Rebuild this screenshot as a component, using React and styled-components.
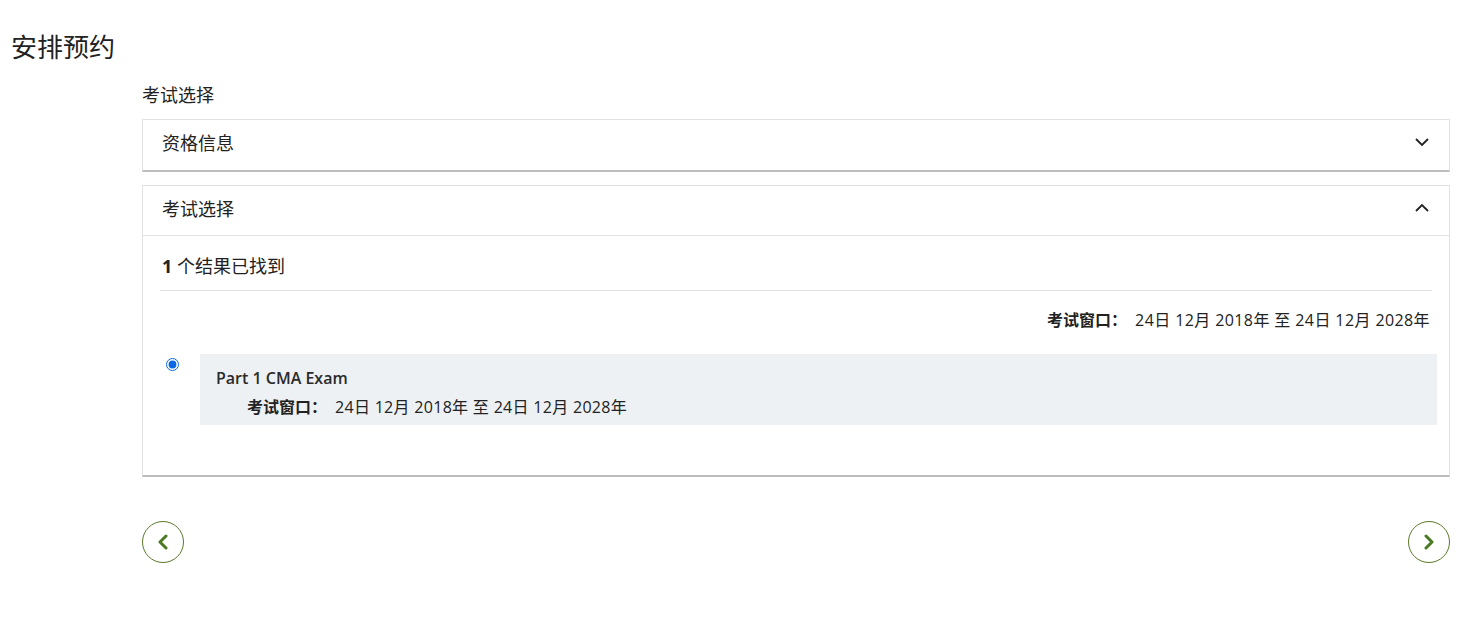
import React, { useState } from "react";
import styled, { createGlobalStyle } from "styled-components";

const GlobalStyle = createGlobalStyle`
  html, body {
    margin: 0;
    padding: 0;
    background: #fff;
    font-family: "Open Sans", "Noto Sans CJK SC", sans-serif;
    color: #222;
  }
`;

const Page = styled.div`
  padding: 26px 10px 0 11px;
`;

const PageTitle = styled.h1`
  margin: 0;
  font-size: 26px;
  font-weight: 400;
  line-height: 42px;
  color: #222;
`;

const Content = styled.div`
  margin-left: 131px;
  margin-top: 14px;
`;

const SectionLabel = styled.div`
  font-size: 18px;
  line-height: 26px;
  margin-bottom: 11px;
  color: #222;
`;

// 아코디언 패널
const Panel = styled.div`
  border: 1px solid #e2e2e2;
  border-bottom: 2px solid #bdbdbd;
  background: #fff;
  margin-bottom: 13px;
`;

const PanelHeader = styled.button`
  display: flex;
  width: 100%;
  height: 50px;
  align-items: center;
  justify-content: space-between;
  padding: 0 19px 6px 19px;
  border: none;
  border-bottom: ${(p) => (p.$open ? "1px solid #e2e2e2" : "none")};
  background: #fff;
  font-family: inherit;
  font-size: 18px;
  color: #222;
  cursor: pointer;
  text-align: left;
`;

const PanelBody = styled.div`
  padding: 17px 17px 50px 17px;
`;

const ResultCount = styled.div`
  font-size: 18px;
  line-height: 26px;
  padding: 0 0 11px 2px;
  border-bottom: 1px solid #e2e2e2;
  b {
    font-weight: 700;
  }
`;

const WindowRow = styled.div`
  display: flex;
  justify-content: flex-end;
  padding: 17px 2px 0 0;
  font-size: 16px;
  line-height: 24px;
  letter-spacing: 0.4px;
`;

const WindowLabel = styled.span`
  font-weight: 700;
  margin-right: 8px;
  letter-spacing: 0;
`;

const ExamRow = styled.label`
  display: flex;
  align-items: flex-start;
  margin-top: 22px;
  margin-right: -5px;
`;

const Radio = styled.input`
  width: 13px;
  height: 13px;
  margin: 4px 21px 0 6px;
  accent-color: #0a66e4;
`;

const ExamCard = styled.div`
  flex: 1;
  background: #edf1f4;
  padding: 11px 16px 2px 16px;
  font-size: 16px;
  line-height: 26px;
`;

const ExamName = styled.div`
  font-weight: 600;
  color: #2a2a2a;
`;

const ExamWindow = styled.div`
  padding-left: 31px;
  line-height: 32px;
  letter-spacing: 0.3px;
`;

const Nav = styled.div`
  display: flex;
  justify-content: space-between;
  margin-top: 44px;
`;

const CircleButton = styled.button`
  width: 42px;
  height: 42px;
  border-radius: 50%;
  border: 1px solid #5a7a2a;
  background: #fff;
  display: flex;
  align-items: center;
  justify-content: center;
  padding: 0;
  cursor: pointer;
`;

const Chevron = ({ dir }) => {
  const d = {
    down: "M2 5 L8 11 L14 5",
    up: "M2 11 L8 5 L14 11",
  }[dir];
  return (
    <svg width="16" height="16" viewBox="0 0 16 16">
      <path d={d} fill="none" stroke="#222" strokeWidth="1.8" />
    </svg>
  );
};

const Arrow = ({ dir }) => (
  <svg width="14" height="16" viewBox="0 0 14 16">
    <path
      d={dir === "left" ? "M10 2 L4 8 L10 14" : "M4 2 L10 8 L4 14"}
      fill="none"
      stroke="#4a7a22"
      strokeWidth="3"
      strokeLinecap="round"
      strokeLinejoin="round"
    />
  </svg>
);

export default function App() {
  const [open, setOpen] = useState({ info: false, exam: true });
  const toggle = (k) => setOpen({ ...open, [k]: !open[k] });

  return (
    <Page>
      <GlobalStyle />
      <PageTitle>安排预约</PageTitle>
      <Content>
        <SectionLabel>考试选择</SectionLabel>
        <Panel>
          <PanelHeader $open={open.info} onClick={() => toggle("info")}>
            资格信息
            <Chevron dir={open.info ? "up" : "down"} />
          </PanelHeader>
        </Panel>
        <Panel>
          <PanelHeader $open={open.exam} onClick={() => toggle("exam")}>
            考试选择
            <Chevron dir={open.exam ? "up" : "down"} />
          </PanelHeader>
          {open.exam && (
            <PanelBody>
              <ResultCount>
                <b>1</b> 个结果已找到
              </ResultCount>
              <WindowRow>
                <WindowLabel>考试窗口：</WindowLabel>
                24日 12月 2018年 至 24日 12月 2028年
              </WindowRow>
              <ExamRow>
                <Radio type="radio" name="exam" defaultChecked />
                <ExamCard>
                  <ExamName>Part 1 CMA Exam</ExamName>
                  <ExamWindow>
                    <WindowLabel>考试窗口：</WindowLabel>
                    24日 12月 2018年 至 24日 12月 2028年
                  </ExamWindow>
                </ExamCard>
              </ExamRow>
            </PanelBody>
          )}
        </Panel>
        <Nav>
          <CircleButton>
            <Arrow dir="left" />
          </CircleButton>
          <CircleButton>
            <Arrow dir="right" />
          </CircleButton>
        </Nav>
      </Content>
    </Page>
  );
}
